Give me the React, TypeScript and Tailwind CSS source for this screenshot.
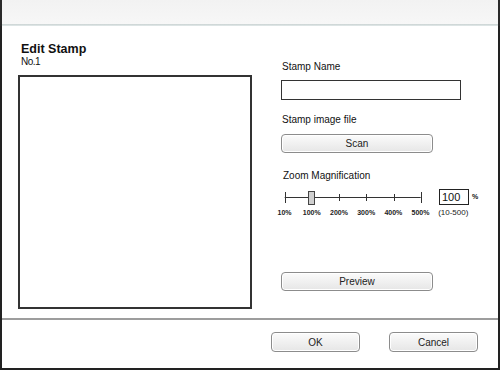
export default function App() {
  const ticks = [3.7, 30.9, 58.1, 85.3, 112.5, 139.7];
  const labels = ["10%", "100%", "200%", "300%", "400%", "500%"];
  const btn =
    "flex items-center justify-center rounded-[4px] border border-[#8c8c8c] bg-gradient-to-b from-[#fbfbfb] to-[#e6e6e6] text-[10px] text-[#222] shadow-[inset_0_0_0_1px_#ffffff]";
  return (
    <div
      className="flex h-[370px] w-[500px] flex-col overflow-hidden bg-white text-[#111]"
      style={{ fontFamily: '"Liberation Sans", "Noto Sans CJK JP", sans-serif' }}
    >
      <div className="h-[24px] border-x-2 border-[#2a2a2a] bg-gradient-to-b from-[#f2f2f2] to-[#f7f7f7]" />
      <div className="h-[2px] border-x-2 border-[#2a2a2a] bg-gradient-to-b from-[#c9d2d2] to-[#e3eaea]" />
      <div className="flex flex-1 flex-col border-x-2 border-b-2 border-[#222]">
        <div className="flex h-[290px]">
          <div className="flex w-[279px] flex-col pl-[16px] pt-[16px]">
            <div className="pl-[3px] text-[12.5px] font-bold leading-[14px]">Edit Stamp</div>
            <div className="pl-[3px] text-[10px] leading-[12px] tracking-[-0.5px]">No.1</div>
            <div className="mt-[7px] h-[234px] w-[234px] border-2 border-[#333]" />
          </div>
          <div className="flex flex-col pt-[35px]">
            <div className="pl-[1px] text-[10px] leading-[12px]">Stamp Name</div>
            <div className="mt-[7px] h-[20px] w-[180px] border border-[#333]" />
            <div className="mt-[14px] pl-[1px] text-[10px] leading-[12px]">Stamp image file</div>
            <div className={`${btn} mt-[8px] h-[19px] w-[152px]`}>Scan</div>
            <div className="mt-[17px] pl-[2px] text-[10px] leading-[12px]">Zoom Magnification</div>
            <div className="mt-[7px] flex items-start">
              <svg width="146" height="16" viewBox="0 0 146 16" className="shrink-0">
                <line x1="3.7" y1="8.5" x2="139.7" y2="8.5" stroke="#333" strokeWidth="1" />
                {ticks.map((x, i) => (
                  <line
                    key={i}
                    x1={Math.round(x) + 0.5}
                    x2={Math.round(x) + 0.5}
                    y1={i === 0 || i === 5 ? 3 : 5}
                    y2={i === 0 || i === 5 ? 14 : 12}
                    stroke="#333"
                    strokeWidth="1"
                  />
                ))}
                <rect x="27.5" y="2.5" width="6" height="13" fill="#cfcfcf" stroke="#444" strokeWidth="1" />
              </svg>
              <div className="ml-[12px] flex h-[16px] w-[30px] items-center border border-[#222] pl-[2px] text-[11px] leading-none">
                100
              </div>
              <div className="ml-[3px] mt-[4px] text-[7px] font-bold leading-none">%</div>
            </div>
            <div className="mt-[3px] flex items-center">
              <div className="-ml-[10px] flex">
                {labels.map((l) => (
                  <div key={l} className="w-[27.2px] text-center text-[7px] font-bold leading-[10px] text-[#222]">
                    {l}
                  </div>
                ))}
              </div>
              <div className="ml-[4px] text-[8px] leading-[10px] text-[#222]">(10-500)</div>
            </div>
            <div className={`${btn} mt-[54px] h-[19px] w-[152px]`}>Preview</div>
          </div>
        </div>
        <div className="mt-[2px] h-[2px] bg-[#9d9d9d]" />
        <div className="flex justify-end gap-[29px] pr-[20px] pt-[12px]">
          <div className={`${btn} h-[20px] w-[89px]`}>OK</div>
          <div className={`${btn} h-[20px] w-[89px]`}>Cancel</div>
        </div>
      </div>
    </div>
  );
}
